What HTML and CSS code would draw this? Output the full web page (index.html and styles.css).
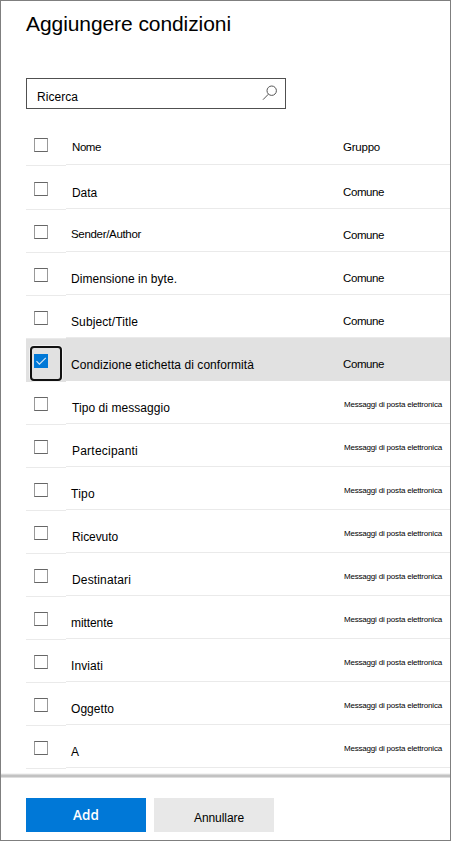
FILE: index.html
```html
<!DOCTYPE html>
<html lang="it">
<head>
<meta charset="utf-8">
<title>Aggiungere condizioni</title>
<link rel="stylesheet" href="styles.css">
</head>
<body>
<main class="panel">
  <h1 class="title"><span data-width="205">Aggiungere condizioni</span></h1>
  <div class="search">
    <span class="search-label" data-width="41">Ricerca</span>
    <svg class="search-icon" width="16" height="16" viewBox="0 0 16 16"><circle cx="9.7" cy="5.7" r="4.7"/><path d="M6.4 9.2 1 14.7"/></svg>
  </div>
  <div class="list" id="list">
    <div class="row head">
      <div class="check"><i class="box"></i></div>
      <div class="name inset"><span data-width="29">Nome</span></div>
      <div class="group"><span data-width="37">Gruppo</span></div>
    </div>
  </div>
  <footer class="footer">
    <button class="btn primary"><span data-width="26">Add</span></button>
    <button class="btn secondary"><span data-width="50">Annullare</span></button>
  </footer>
</main>
<script src="script.js"></script>
</body>
</html>
```
FILE: styles.css
```css
* { box-sizing: border-box; }
body { margin: 0; background: #fff; color: #000; font-family: "Liberation Sans", Arial, sans-serif; font-size: 12px; }
.panel { width: 451px; height: 841px; border: 1px solid #7f7f7f; display: flex; flex-direction: column; overflow: hidden; }
.panel span { white-space: nowrap; }
.title { margin: 9px 0 0 25px; height: 28px; font-size: 21px; line-height: 28px; font-weight: 400; }
.search { margin: 40px 0 0 25px; width: 260px; height: 31px; border: 1px solid #505050; display: flex; justify-content: space-between; padding: 6px 7px 0 10px; }
.search-label { line-height: 14px; padding-top: 5px; }
.search-icon { fill: none; stroke: #555; stroke-width: 1; }
.list { margin-left: 25px; margin-top: 12px; flex: none; }
.row { display: grid; grid-template-columns: 40px 277px 1fr; grid-template-rows: 43px; height: 43px; line-height: 14px; }
.check { height: 44px; padding: 16px 0 0 8px; border-bottom: 1px solid #eaeaea; }
.box { display: block; width: 14px; height: 14px; border: 1px solid #666; border-left-color: #999; border-right-color: #999; }
.name, .group { border-bottom: 1px solid #eaeaea; }
.name { padding: 20px 0 0 5px; }
.name.inset { padding-left: 6px; }
.group { padding-top: 19px; font-size: 11.5px; }
.head, .first { height: 44px; grid-template-rows: 44px; }
.head .check, .first .check { height: 45px; padding-top: 17px; }
.head .name, .head .group { padding-top: 19px; font-size: 11.5px; }
.first .name { padding-top: 21px; }
.first .group { padding-top: 20px; }
.raised .name { padding-top: 18px; font-size: 11.5px; }
.mail .group { padding: 17px 0 0 1px; font-size: 8px; }
.selected .check, .selected .name, .selected .group { background: #e1e1e1; border-bottom-color: #e1e1e1; }
.selected .check { height: 43px; margin-top: 1px; padding: 7px 0 0 4px; }
.focus { width: 32px; height: 35px; border: 2px solid #111; border-radius: 4px; box-shadow: 0 0 0 1px #fff8; padding: 6px 0 0 2px; }
.tick { display: block; background: #0078d7; fill: none; stroke: #d5e7f7; stroke-width: 1.1; }
.footer { margin-top: 5px; height: 67px; display: flex; gap: 8px; padding: 25px 0 0 25px; background: linear-gradient(#f4f4f4 0 1px, #d8d8d8 1px 2px, #c2c2c2 2px 4px, #dedede 4px 5px, #fff 5px); }
.btn { width: 120px; height: 34px; border: 0; padding: 0; font-family: inherit; font-size: 12px; color: #000; }
.primary { background: #0078d7; color: #fff; font: 600 13.5px "Open Sans", sans-serif; }
.secondary { background: #e8e8e8; padding: 6px 0 0 10px; }
```
FILE: script.js
```js
const rows = [
  ["Data", 25, 1, "first"],
  ["Sender/Author", 70, 0, "raised"],
  ["Dimensione in byte.", 106, 0, ""],
  ["Subject/Title", 67, 0, ""],
  ["Condizione etichetta di conformità", 183, 0, "selected"],
  ["Tipo di messaggio", 98, 1, "mail"],
  ["Partecipanti", 66, 1, "mail"],
  ["Tipo", 24, 0, "mail"],
  ["Ricevuto", 46, 1, "mail"],
  ["Destinatari", 59, 1, "mail"],
  ["mittente", 42, 0, "mail"],
  ["Inviati", 32, 0, "mail"],
  ["Oggetto", 43, 0, "mail"],
  ["A", 8, 0, "mail"]
];
const box = '<i class="box"></i>';
const ticked = '<div class="focus"><svg class="tick" width="14" height="14" viewBox="0 0 14 14"><path d="M2.5 7.2 5.4 10.2 11.8 3.8"/></svg></div>';
document.getElementById("list").insertAdjacentHTML("beforeend", rows.map(([name, width, inset, kind]) => `
  <div class="row ${kind}">
    <div class="check">${kind === "selected" ? ticked : box}</div>
    <div class="name ${inset ? "inset" : ""}"><span data-width="${width}">${name}</span></div>
    <div class="group">${kind === "mail" ? '<span data-width="98">Messaggi di posta elettronica</span>' : '<span data-width="41">Comune</span>'}</div>
  </div>`).join(""));

document.querySelectorAll("[data-width]").forEach((el) => {
  const natural = el.getBoundingClientRect().width;
  el.style.letterSpacing = (Number(el.dataset.width) - natural) / el.textContent.length + "px";
});
```
